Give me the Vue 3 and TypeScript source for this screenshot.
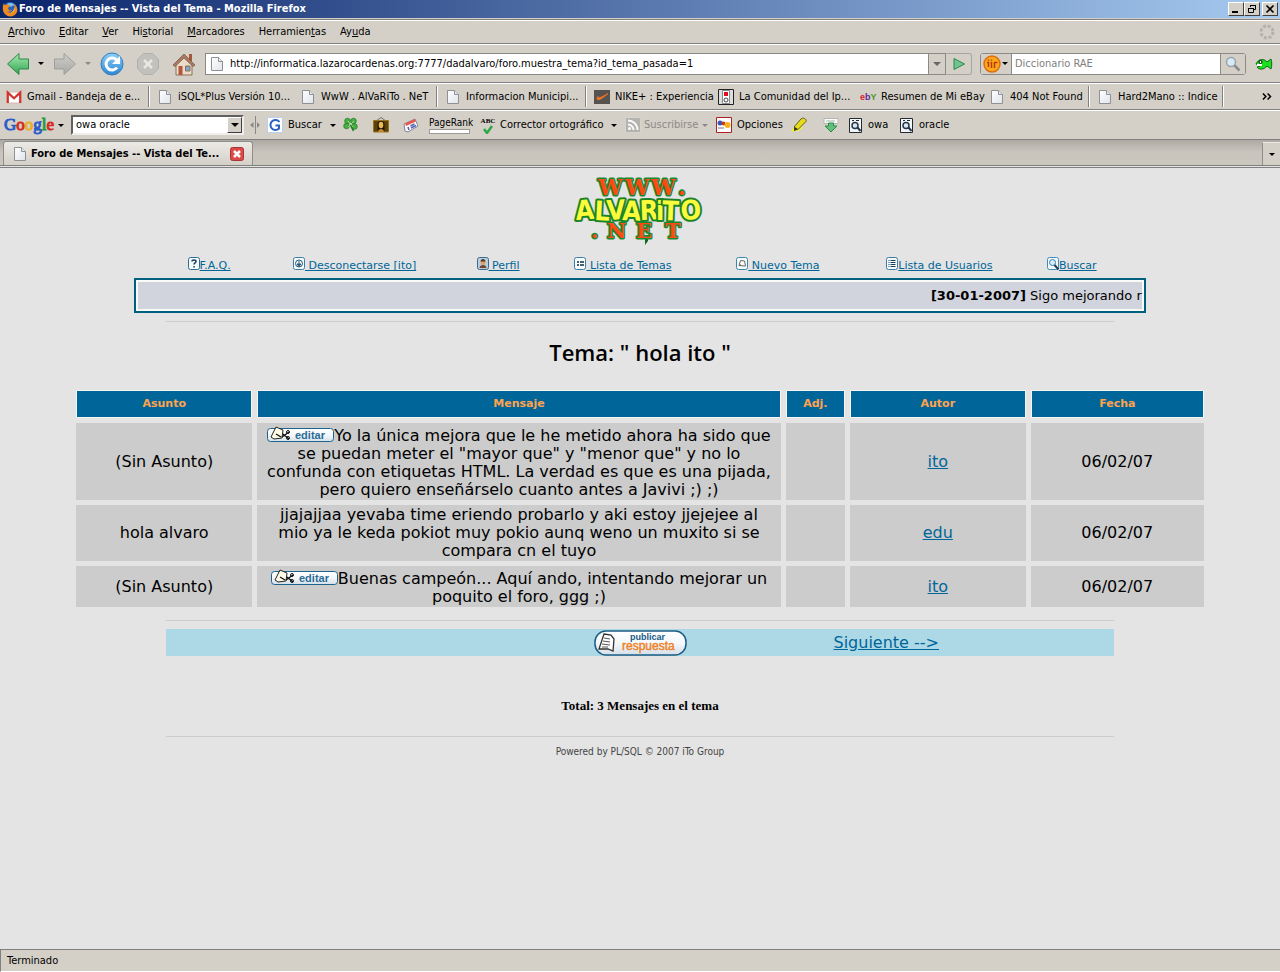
<script setup lang="ts">
import { ref } from 'vue'

interface MenuEntry { before: string; key: string; after: string }
interface Bookmark { icon: string; label: string; sep?: boolean }
interface NavLink { icon: string; label: string }
interface Message { subject: string; lines: string[]; editable: boolean; author: string; date: string }

const menus: MenuEntry[] = [
  { before: '', key: 'A', after: 'rchivo' },
  { before: '', key: 'E', after: 'ditar' },
  { before: '', key: 'V', after: 'er' },
  { before: 'Hi', key: 's', after: 'torial' },
  { before: '', key: 'M', after: 'arcadores' },
  { before: 'Herramien', key: 't', after: 'as' },
  { before: 'Ay', key: 'u', after: 'da' },
]

const bookmarks: Bookmark[] = [
  { icon: 'gmail', label: 'Gmail - Bandeja de e...', sep: true },
  { icon: 'doc', label: 'iSQL*Plus Versión 10...' },
  { icon: 'doc', label: 'WwW . AlVaRiTo . NeT', sep: true },
  { icon: 'doc', label: 'Informacion Municipi...', sep: true },
  { icon: 'swoosh', label: 'NIKE+ : Experiencia' },
  { icon: 'ipod', label: 'La Comunidad del Ip...' },
  { icon: 'ebay', label: 'Resumen de Mi eBay' },
  { icon: 'doc', label: '404 Not Found', sep: true },
  { icon: 'doc', label: 'Hard2Mano :: Indice', sep: true },
]

const navLinks: NavLink[] = [
  { icon: 'n-faq', label: 'F.A.Q.' },
  { icon: 'n-off', label: '\u00a0Desconectarse [ito]' },
  { icon: 'n-user', label: '\u00a0Perfil' },
  { icon: 'n-list', label: '\u00a0Lista de Temas' },
  { icon: 'n-new', label: '\u00a0Nuevo Tema' },
  { icon: 'n-users', label: 'Lista de Usuarios' },
  { icon: 'n-find', label: 'Buscar' },
]

const messages: Message[] = [
  {
    subject: '(Sin Asunto)',
    lines: [
      'Yo la única mejora que le he metido ahora ha sido que',
      'se puedan meter el "mayor que" y "menor que" y no lo',
      'confunda con etiquetas HTML. La verdad es que es una pijada,',
      'pero quiero enseñárselo cuanto antes a Javivi ;) ;)',
    ],
    editable: true, author: 'ito', date: '06/02/07',
  },
  {
    subject: 'hola alvaro',
    lines: [
      'jjajajjaa yevaba time eriendo probarlo y aki estoy jjejejee al',
      'mio ya le keda pokiot muy pokio aunq weno un muxito si se',
      'compara cn el tuyo',
    ],
    editable: false, author: 'edu', date: '06/02/07',
  },
  {
    subject: '(Sin Asunto)',
    lines: ['Buenas campeón... Aquí ando, intentando mejorar un', 'poquito el foro, ggg ;)'],
    editable: true, author: 'ito', date: '06/02/07',
  },
]

const address = ref('http://informatica.lazarocardenas.org:7777/dadalvaro/foro.muestra_tema?id_tema_pasada=1')
const dictionary = ref('')
const query = ref('owa oracle')
</script>

<template>
  <div class="window">
    <svg class="defs" aria-hidden="true">
      <defs>
        <linearGradient id="g-green" x1="0" y1="0" x2="0" y2="1"><stop offset="0" stop-color="#a8eab0" /><stop offset="1" stop-color="#2fa552" /></linearGradient>
        <linearGradient id="g-grey" x1="0" y1="0" x2="0" y2="1"><stop offset="0" stop-color="#cfcdc8" /><stop offset="1" stop-color="#aaa8a4" /></linearGradient>
        <linearGradient id="g-blue" x1="0" y1="0" x2="0" y2="1"><stop offset="0" stop-color="#8fd0f8" /><stop offset="1" stop-color="#2d86d0" /></linearGradient>
        <linearGradient id="g-pill" x1="0" y1="0" x2="0" y2="1"><stop offset="0" stop-color="#ffffff" /><stop offset="0.5" stop-color="#f4f8fb" /><stop offset="1" stop-color="#d3dfe8" /></linearGradient>
        <linearGradient id="g-page" x1="0" y1="0" x2="1" y2="1"><stop offset="0" stop-color="#ffffff" /><stop offset="1" stop-color="#dfe4ea" /></linearGradient>
      </defs>
      <symbol id="doc" viewBox="0 0 16 16"><path d="M2.500 1.500h7l4 4v9h-11z" fill="url(#g-page)" stroke="#8d9095" /><path d="M9.500 1.500v4h4" fill="#e8ecf0" stroke="#8d9095" /></symbol>
      <symbol id="gmail" viewBox="0 0 16 16"><path d="M1 3h14v11H1z" fill="#fff" stroke="#d8a8a4" stroke-width=".8" /><path d="M1.800 14V3.600L8 9.200l6.200-5.600V14" fill="none" stroke="#d0342c" stroke-width="2.200" /></symbol>
      <symbol id="swoosh" viewBox="0 0 16 16"><path d="M0 1h16v14H0z" fill="#55524f" /><path d="M4 7.500c0 2 2 1.800 10-3C8 9.500 5 11.500 3.500 10.500 2.500 9.500 3.300 8.300 4 7.500z" fill="#ee7426" stroke="#ee7426" /></symbol>
      <symbol id="ipod" viewBox="0 0 16 16"><path d="M.5.500h15v15H.5z" fill="#ddd" stroke="#222" /><path d="M4.500 1.500h7v13h-7z" fill="#fff" stroke="#888" /><path d="M6 3h4v4H6z" fill="#e01020" /><circle cx="8" cy="11" r="2" fill="none" stroke="#444" /></symbol>
      <symbol id="finder" viewBox="0 0 14 16"><path d="M.500 1.500h12v14H.500z" fill="#f4f5f7" stroke="#222a33" /><path d="M3 3.500h2M7 3.500h3" stroke="#222a33" /><circle cx="6" cy="8.500" r="3" fill="#dbe7f2" stroke="#26384c" stroke-width="1.500" /><path d="M8.500 10.500l3 3.500" stroke="#26384c" stroke-width="2" /></symbol>
      <symbol id="n-faq" viewBox="0 0 12 13"><rect x=".5" y=".5" width="11" height="12" rx="2" fill="#f5fafd" stroke="#2c6c94" /><path d="M4 4.500c0-2 4-2 4 0 0 1.300-2 1.300-2 3M6 9v1.500" fill="none" stroke="#173f5c" stroke-width="1.500" /></symbol>
      <symbol id="n-off" viewBox="0 0 12 13"><rect x=".5" y=".5" width="11" height="12" rx="2" fill="#f5fafd" stroke="#3c7ca4" /><circle cx="6" cy="6.500" r="3.500" fill="none" stroke="#285878" /><path d="M6 4v5M4 7l2 2.500L8 7z" fill="#285878" stroke="#285878" /></symbol>
      <symbol id="n-user" viewBox="0 0 12 13"><rect x=".5" y=".5" width="11" height="12" rx="2" fill="#b9cedc" stroke="#3c6c8c" /><path d="M2.500 11c0-4 7-4 7 0z" fill="#744434" /><circle cx="6" cy="5.500" r="2.500" fill="#dca070" /><path d="M3.500 4.500c0-3.500 5-3.500 5 0z" fill="#54371f" /></symbol>
      <symbol id="n-list" viewBox="0 0 12 13"><rect x=".5" y=".5" width="11" height="12" rx="2" fill="#f5fafd" stroke="#3c7ca4" /><path d="M3 5h2M3 8h2M6 5h4M6 8h4" stroke="#142c3c" stroke-width="1.500" /></symbol>
      <symbol id="n-new" viewBox="0 0 12 13"><rect x=".5" y=".5" width="11" height="12" rx="2" fill="#f5fafd" stroke="#3c84ac" /><path d="M4.500 3.500l4 .5 1 5-6.500-.5z" fill="#fff" stroke="#70645c" /><path d="M3 8.500l2-.8" stroke="#70645c" /></symbol>
      <symbol id="n-users" viewBox="0 0 12 13"><rect x=".5" y=".5" width="11" height="12" rx="2" fill="#f5fafd" stroke="#3c7ca4" /><path d="M2.500 3.500h1M2.500 5.500h1M2.500 7.500h1M2.500 9.500h1M4.500 3.500h5M4.500 5.500h5M4.500 7.500h5M4.500 9.500h5" stroke="#1c3c54" /></symbol>
      <symbol id="n-find" viewBox="0 0 12 13"><rect x=".5" y=".5" width="11" height="12" rx="2" fill="#f5fafd" stroke="#3c8cbc" /><circle cx="5.500" cy="5.500" r="3" fill="#d8eefa" stroke="#3880ac" /><path d="M7.500 8l4 4.500" stroke="#173f5c" stroke-width="2" /></symbol>
    </svg>

    <header class="titlebar">
      <svg class="fox" viewBox="0 0 16 16" aria-hidden="true">
        <circle cx="8" cy="8" r="7" fill="#2c62b8" /><path d="M5 3c3-2 7-1 8 2-2-1-3 0-4 1z" fill="#7cc4f0" />
        <path d="M13 5c2 4 0 8-4 9-3 0-5-1-6-3 3 3 9 1 10-6z" fill="#fcd04c" />
        <path d="M2 2c0 2 1 2 2 2 2-1 3 0 4 1L6 7c0 2 2 3 4 2-1 2-4 2-5 1 2 3 7 2 8-2 0-2-.5-4-2-5 4 1 5 5 4 8-2 5-9 6-12 2C0 10 .5 5 2 2z" fill="#f08a1c" />
      </svg>
      <span class="title">Foro de Mensajes -- Vista del Tema - Mozilla Firefox</span>
      <div class="winbtns">
        <button type="button" class="winbtn" aria-label="Minimizar"><svg viewBox="0 0 12 10"><path d="M2 8h6" stroke="#000" stroke-width="2" /></svg></button>
        <button type="button" class="winbtn" aria-label="Restaurar"><svg viewBox="0 0 12 10"><path d="M4.500 3V1.500h5v4H8M4 1.500h6M2.500 4.500h5v4h-5zM2 4.500h6" fill="none" stroke="#000" /></svg></button>
        <button type="button" class="winbtn close" aria-label="Cerrar"><svg viewBox="0 0 12 10"><path d="M2.500 1.500l7 7M9.500 1.500l-7 7" stroke="#000" stroke-width="1.600" /></svg></button>
      </div>
    </header>

    <nav class="menubar" aria-label="Menú">
      <button v-for="m in menus" :key="m.before + m.key" type="button" class="menu">{{ m.before }}<u>{{ m.key }}</u>{{ m.after }}</button>
      <svg class="throbber" viewBox="0 0 16 16" aria-hidden="true"><circle cx="8" cy="8" r="6" fill="none" stroke="#b3b1ac" stroke-width="3" stroke-dasharray="3 1.710" /></svg>
    </nav>

    <div class="navbar">
      <button type="button" class="flat back" aria-label="Atrás"><svg viewBox="0 0 24 24"><path d="M1.500 12L13 1.500V7h9.500v10H13v5.500z" fill="url(#g-green)" stroke="#2b8a45" /></svg></button>
      <button type="button" class="flat drop" aria-label="Historial atrás"><i class="arrow"></i></button>
      <button type="button" class="flat fwd" aria-label="Adelante"><svg viewBox="0 0 24 24"><path d="M22.500 12L11 1.500V7H1.500v10H11v5.500z" fill="url(#g-grey)" stroke="#a09e9a" /></svg></button>
      <button type="button" class="flat drop" aria-label="Historial adelante"><i class="arrow dim"></i></button>
      <button type="button" class="flat reload" aria-label="Recargar"><svg viewBox="0 0 24 24"><circle cx="12" cy="12" r="11" fill="url(#g-blue)" stroke="#2c7cc4" /><path d="M17 15.500a6 6 0 1 1-.5-7.500" fill="none" stroke="#fff" stroke-width="3" /><path d="M20 4v8h-8z" fill="#fff" /></svg></button>
      <button type="button" class="flat" aria-label="Detener"><svg viewBox="0 0 24 24"><path d="M7.500 1.500h9l6 6v9l-6 6h-9l-6-6v-9z" fill="#c3c1bd" stroke="#b1afab" /><path d="M8 8l8 8M16 8l-8 8" stroke="#e9e7e3" stroke-width="2.500" /></svg></button>
      <button type="button" class="flat" aria-label="Inicio"><svg viewBox="0 0 24 24"><path d="M17 2h3v7h-3z" fill="#a4583c" /><path d="M4 11l8-8 8 8v12H4z" fill="#e9dcc8" stroke="#8d7059" /><path d="M1 13L12 2l11 11-2 1.500L12 6l-9 8.500z" fill="#a97b62" stroke="#74503c" stroke-width=".7" /><path d="M6.500 14h4v9h-4z" fill="#b5563c" /><path d="M13.500 14h4.500v5h-4.500z" fill="#7fa6cc" stroke="#8d7059" /></svg></button>
      <div class="address">
        <svg class="ic16" aria-hidden="true"><use href="#doc" /></svg>
        <input v-model="address" type="text" aria-label="Dirección" />
        <button type="button" class="seg" aria-label="Mostrar historial"><i class="arrow grey"></i></button>
      </div>
      <button type="button" class="go" aria-label="Ir"><svg viewBox="0 0 14 14"><path d="M2 1.500L12.500 7 2 12.500z" fill="#70c48c" stroke="#2c8450" /></svg></button>
      <div class="search">
        <button type="button" class="engine" aria-label="Motor de búsqueda">
          <svg viewBox="0 0 18 18"><circle cx="9" cy="9" r="8" fill="#fba81c" stroke="#dd6c10" stroke-width="1.500" /><path d="M5.500 7v5M8.500 7v6M11.500 7v6M4 7.500h2M7.500 7.500h1M11 7.500h3.500M5.500 4.500v1.200M8.500 4.500v1.200" stroke="#b83c08" stroke-width="1.500" /></svg>
          <i class="arrow"></i>
        </button>
        <input v-model="dictionary" type="text" placeholder="Diccionario RAE" aria-label="Buscar en Diccionario RAE" />
        <button type="button" class="seg wide" aria-label="Buscar"><svg viewBox="0 0 16 16"><circle cx="6" cy="6" r="4.500" fill="#d6eaf6" stroke="#9aa2aa" stroke-width="1.500" /><path d="M9.500 9.500l5 5" stroke="#888a8e" stroke-width="2.500" /></svg></button>
      </div>
      <button type="button" class="flat fish" aria-label="Traducir"><svg viewBox="0 0 18 14"><path d="M1 7c2-5 8-6 11-2l4-3c1 3 1 7 0 10l-4-3c-3 4-8 4-10 1l3-1z" fill="#1fe01f" stroke="#0a6a14" /><path d="M2 8h5" stroke="#fff" stroke-width="2" /><circle cx="5.500" cy="5" r="1.500" fill="#fff" stroke="#000" /></svg></button>
    </div>

    <nav class="bookmarks" aria-label="Marcadores">
      <a v-for="b in bookmarks" :key="b.label" href="#" :class="['bm', { sep: b.sep }]">
        <span v-if="b.icon === 'ebay'" class="ebay" aria-hidden="true"><i class="e">e</i><i class="b">b</i><i class="y">Y</i></span>
        <svg v-else class="ic16" aria-hidden="true"><use :href="'#' + b.icon" /></svg><span>{{ b.label }}</span>
      </a>
      <button type="button" class="flat more" aria-label="Más marcadores"><svg viewBox="0 0 8 6"><path d="M.500.500L3 3 .500 5.500M4.500.500L7 3 4.500 5.500" fill="none" stroke="#000" stroke-width="1.300" /></svg></button>
    </nav>

    <div class="gbar">
      <button type="button" class="flat glogo"><span class="gtext"><span class="c1">G</span><span class="c2">o</span><span class="c3">o</span><span class="c1">g</span><span class="c4">l</span><span class="c2">e</span></span><i class="arrow"></i></button>
      <div class="combo">
        <input v-model="query" type="text" aria-label="Búsqueda en Google" />
        <button type="button" aria-label="Desplegar"><i class="arrow big"></i></button>
      </div>
      <svg class="split" viewBox="0 0 10 18" aria-hidden="true"><path d="M5.500 0v18" stroke="#8a8883" /><path d="M3.500 6v6L0 9zM7 6v6l3-3z" fill="#8a8883" /></svg>
      <button type="button" class="flat gi"><svg class="ic16" viewBox="0 0 16 16"><path d="M.500.500h15v15H.500z" fill="#fff" stroke="#b8cfee" /><path d="M12.500 5A5 5 0 1 0 12 11.500V8.500H8.500" fill="none" stroke="#2a62c4" stroke-width="2" /></svg>Buscar</button>
      <button type="button" class="flat" aria-label="Opciones de búsqueda"><i class="arrow"></i></button>
      <button type="button" class="flat" aria-label="Voy a tener suerte"><svg class="ic16" viewBox="0 0 16 16"><g fill="#48b040" stroke="#207824" stroke-width=".7"><circle cx="4.500" cy="4" r="2.800" /><circle cx="10.500" cy="4" r="2.800" /><circle cx="3.500" cy="9" r="2.800" /><circle cx="11.500" cy="9.500" r="2.800" /></g><path d="M5 4l5 6M11 4l-6 6" stroke="#a0dc90" /><path d="M7.500 8l3 6" stroke="#207824" stroke-width="1.500" /></svg></button>
      <button type="button" class="flat" aria-label="Imágenes"><svg class="ic16" viewBox="0 0 16 16"><path d="M3 4l5-3.500L13 4" fill="none" stroke="#77716b" /><path d="M.500 3.500h15V15H.500z" fill="#5c430c" stroke="#9a7418" /><path d="M4.500 14V7c0-4 7-4 7 0v7z" fill="#21160a" /><ellipse cx="8" cy="8" rx="2.300" ry="3.300" fill="#eabb4c" /><path d="M5 15c0-4 6-4 6 0z" fill="#c6882c" /></svg></button>
      <button type="button" class="flat" aria-label="Noticias"><svg class="ic16" viewBox="0 0 16 16"><path d="M1 7l11-5 3 7-10 6-3-1z" fill="#faf8f8" stroke="#86849a" /><path d="M2 6.500L12 2l1 2.500L3 9z" fill="#e6594c" /><path d="M5 10l1 3M7.500 9l4-2M8 11l5-2.500" stroke="#5564b8" stroke-width="1.500" /></svg></button>
      <button type="button" class="flat rank"><span>PageRank</span><i class="meter"></i></button>
      <button type="button" class="flat gi spell"><span class="abc" aria-hidden="true"><b>ABC</b><svg viewBox="0 0 10 9"><path d="M1 4l3 4 5-7" fill="none" stroke="#2ca848" stroke-width="2.500" /></svg></span>Corrector ortográfico</button>
      <button type="button" class="flat" aria-label="Idiomas"><i class="arrow"></i></button>
      <button type="button" class="flat gi off" disabled><svg class="ic16" viewBox="0 0 16 16"><path d="M.500.500h15v15H.500z" fill="#b5b3af" stroke="#d6d4cf" /><circle cx="4.500" cy="11.500" r="1.500" fill="#fff" /><path d="M3 7.500c3 0 5.500 2.500 5.500 5.500M3 3.500c5 0 9.500 4 9.500 9.500" fill="none" stroke="#fff" stroke-width="1.800" /></svg>Suscribirse</button>
      <button type="button" class="flat" disabled aria-label="Lectores"><i class="arrow dim"></i></button>
      <button type="button" class="flat gi"><svg class="ic16" viewBox="0 0 16 16"><path d="M.500.500h15v15H.500z" fill="#fff" stroke="#b02020" /><path d="M2 11h6" stroke="#b8b8c0" stroke-width="2" /><circle cx="4" cy="6" r="2.500" fill="#2c5cb8" /><circle cx="7.500" cy="6.500" r="2" fill="#d43420" /><circle cx="11.500" cy="8" r="3" fill="#f4b41c" /></svg>Opciones</button>
      <button type="button" class="flat" aria-label="Resaltar"><svg class="ic16" viewBox="0 0 16 16"><path d="M0 14c2-4 6-5 12-4-2 4-7 5-12 4z" fill="#f6f230" /><path d="M3 10l7-8c2-2 6 0 5 2.500l-8 8z" fill="#e6dc1c" stroke="#615c18" /><path d="M3 10l4 2.500L3 14z" fill="#3a3818" /></svg></button>
      <button type="button" class="flat" aria-label="Enviar"><svg class="ic16" viewBox="0 0 16 16"><path d="M1 1.500h14v5H1z" fill="#fafafa" stroke="#b6b6b2" /><path d="M3 4h9" stroke="#9fbda6" /><path d="M5.500 6h5v3H14l-6 6-6-6h3.500z" fill="#62c07c" stroke="#2f8c4c" /></svg></button>
      <button type="button" class="flat gi"><svg class="ic14"><use href="#finder" /></svg>owa</button>
      <button type="button" class="flat gi"><svg class="ic14"><use href="#finder" /></svg>oracle</button>
    </div>

    <div class="tabbar">
      <div class="tab">
        <svg class="ic16" aria-hidden="true"><use href="#doc" /></svg>
        <span>Foro de Mensajes -- Vista del Te...</span>
        <button type="button" class="tabclose" aria-label="Cerrar pestaña"><svg viewBox="0 0 14 14"><rect x=".5" y=".5" width="13" height="13" rx="2" fill="#dc4a48" stroke="#a83434" /><path d="M4 4l6 6M10 4l-6 6" stroke="#fff" stroke-width="2.500" /></svg></button>
      </div>
      <button type="button" class="tablist" aria-label="Lista de pestañas"><i class="arrow"></i></button>
    </div>

    <main class="page">
      <svg class="logo" viewBox="0 0 134 70" role="img" aria-label="www.alvarito.net">
        <path d="M72 58v10l3-4v-6z" fill="#0a6a20" />
        <g stroke-linejoin="round" paint-order="stroke" font-weight="700">
          <g fill="#ff4a14" stroke="#178a34" stroke-width="3">
            <text y="18" font-family="DejaVu Serif" font-size="22" x="25 52 78 105">WWW.</text>
            <text y="61" font-family="DejaVu Serif" font-size="21" x="18 34 63 92">.NET</text>
          </g>
          <text y="43" font-family="DejaVu Sans Condensed" font-size="27" x="3 21 34 49 67 83 89 108" rotate="-4 3 -3 2 -2 0 2 -3" fill="#fbfb3c" stroke="#1c8428" stroke-width="4">ALVARiTO</text>
        </g>
      </svg>

      <nav class="links" aria-label="Foro">
        <a v-for="l in navLinks" :key="l.label" href="#"><svg aria-hidden="true"><use :href="'#' + l.icon" /></svg><span>{{ l.label }}</span></a>
      </nav>

      <div class="news"><p><b>[30-01-2007]</b> Sigo mejorando r</p></div>
      <hr />
      <h2>Tema: " hola ito "</h2>

      <table class="posts">
        <colgroup><col class="c-subject" /><col /><col class="c-adj" /><col class="c-author" /><col class="c-date" /></colgroup>
        <thead>
          <tr><th scope="col">Asunto</th><th scope="col">Mensaje</th><th scope="col">Adj.</th><th scope="col">Autor</th><th scope="col">Fecha</th></tr>
        </thead>
        <tbody>
          <tr v-for="(m, i) in messages" :key="i">
            <td>{{ m.subject }}</td>
            <td :class="['msg', { first: m.editable }]">
              <div v-for="(line, n) in m.lines" :key="n" class="line">
                <a v-if="m.editable && n === 0" href="#" class="edit" aria-label="editar">
                  <svg viewBox="0 0 67 18"><rect x=".5" y="3.500" width="66" height="13" rx="3" fill="url(#g-pill)" stroke="#1c648c" /><path d="M4 12l5-10 7 3-1 8-8 1z" fill="#fffbe6" stroke="#222" /><path d="M9 9l5 3M22 7l-7 5M22 14l-6-5" stroke="#111" stroke-width="1.300" /><circle cx="21" cy="7" r="1.500" fill="none" stroke="#111" /><circle cx="21" cy="13" r="1.500" fill="none" stroke="#111" /><text x="28" y="14" font-family="Liberation Sans" font-weight="700" font-size="11" fill="#2a6c96">editar</text></svg>
                </a>{{ line }}
              </div>
            </td>
            <td></td>
            <td><a href="#">{{ m.author }}</a></td>
            <td>{{ m.date }}</td>
          </tr>
        </tbody>
      </table>

      <hr class="after" />
      <div class="actions">
        <a href="#" class="reply" aria-label="publicar respuesta">
          <svg viewBox="0 0 93 26"><rect x="1" y="1" width="91" height="24" rx="11" fill="url(#g-pill)" stroke="#1c5c84" stroke-width="1.500" /><path d="M10 4l7 1 3 4-1 12-5-2-9 0z" fill="#fff" stroke="#333" stroke-width="1.300" /><path d="M10 8l6 1M9 11l7 1M8 14l8 1M8 17l6 0" stroke="#555" /><text x="36" y="10" font-family="Liberation Sans" font-weight="700" font-size="9" fill="#1a5a88">publicar</text><text x="28" y="20" font-family="Liberation Sans" font-size="12" fill="#f08020" stroke="#f08020" stroke-width=".4">respuesta</text></svg>
        </a>
        <a href="#" class="next">Siguiente --&gt;</a>
      </div>
      <p class="total">Total: 3 Mensajes en el tema</p>
      <hr />
      <p class="powered">Powered by PL/SQL © 2007 iTo Group</p>
    </main>

    <footer class="status">Terminado</footer>
  </div>
</template>

<style>
body { margin: 0; background: #e4e4e4; }
</style>

<style scoped>
.window { min-height: 100vh; display: flex; flex-direction: column; background: #d4d0c8; color: #000; font: 11px/14px "DejaVu Sans Condensed", "DejaVu Sans", sans-serif; overflow: hidden; }
.window * { box-sizing: border-box; }
.defs { position: absolute; width: 0; height: 0; }
button, input { font: inherit; color: inherit; margin: 0; padding: 0; border: 0; background: none; border-radius: 0; outline: 0; min-width: 0; }
svg { display: block; flex: none; }
.ic16 { width: 16px; height: 16px; }
.ic14 { width: 14px; height: 16px; }
.flat { display: flex; align-items: center; white-space: nowrap; }
.arrow { flex: none; width: 0; height: 0; border: 3px solid transparent; border-top-color: #000; border-bottom-width: 0; }
.arrow.dim { border-top-color: #8c8a86; }
.arrow.grey { border-width: 4px 4px 0; border-top-color: #666; }
.arrow.big { border-width: 4px 4px 0; }

.titlebar { height: 19px; display: flex; align-items: center; padding: 0 2px; background: linear-gradient(90deg, #0a246a, #a6caf0); color: #fff; font-weight: 700; border-bottom: 1px solid #d4d0c8; }
.fox { width: 16px; height: 16px; }
.title { flex: 1; padding-left: 1px; white-space: nowrap; }
.winbtns { display: flex; }
.winbtn { width: 16px; height: 14px; display: flex; align-items: center; justify-content: center; background: #d4d0c8; border: 1px solid; border-color: #fff #404040 #404040 #fff; }
.winbtn svg { width: 12px; height: 10px; }
.winbtn.close { margin-left: 2px; }

.menubar { height: 25px; display: flex; align-items: center; gap: 14px; padding: 1px 5px 0 8px; border-top: 1px solid #808080; border-bottom: 1px solid #808080; box-shadow: inset 0 1px #fff; }
.menu { white-space: nowrap; }
.throbber { width: 16px; height: 16px; margin-left: auto; }

.navbar { height: 39px; display: flex; align-items: center; padding: 0 7px 0 6px; border-top: 1px solid #fff; border-bottom: 1px solid #808080; }
.navbar .flat svg { width: 24px; height: 24px; }
.navbar .flat + .flat { margin-left: 12px; }
.navbar .drop.flat { margin-left: 8px; width: 7px; }
.navbar .flat.fwd, .navbar .flat.reload { margin-left: 8px; }
.address { flex: 1; margin-left: 9px; height: 22px; display: flex; align-items: center; background: #fff; border: 1px solid #8c8a86; padding-left: 3px; }
.address input { flex: 1; padding-left: 5px; height: 18px; }
.seg { width: 17px; height: 20px; display: flex; align-items: center; justify-content: center; background: #d4d0c8; border-left: 1px solid #8c8a86; }
.seg.wide { width: 25px; }
.seg svg { width: 16px; height: 16px; }
.go { width: 26px; height: 22px; display: flex; align-items: center; justify-content: center; border: 1px solid #a8a6a2; border-left: 0; border-radius: 0 3px 3px 0; }
.go svg { width: 14px; height: 14px; }
.search { width: 266px; margin-left: 8px; height: 22px; display: flex; align-items: center; background: #fff; border: 1px solid #8c8a86; border-radius: 3px; overflow: hidden; }
.engine { width: 31px; height: 20px; display: flex; align-items: center; justify-content: space-between; padding: 0 3px 0 2px; background: #d4d0c8; border-right: 1px solid #8c8a86; }
.engine svg { width: 18px; height: 18px; }
.search input { flex: 1; padding-left: 3px; }
.search input::placeholder { color: #808080; opacity: 1; }
.navbar .fish.flat { margin-left: 9px; }
.navbar .fish.flat svg { width: 18px; height: 14px; }

.bookmarks { height: 27px; display: grid; grid-template-columns: 151px 143px 145px 149px 124px 142px 129px 108px 134px 1fr; align-items: center; padding: 0 6px; border-top: 1px solid #fff; border-bottom: 1px solid #808080; }
.bm { height: 21px; display: flex; align-items: center; gap: 5px; color: #000; text-decoration: none; white-space: nowrap; }
.bm.sep { border-right: 1px solid #808080; box-shadow: 1px 0 #fff; margin-right: 8px; }
.ebay { width: 16px; font: 700 9px/12px "Liberation Sans", sans-serif; }
.ebay i { font-style: normal; }
.e { color: #d8202c; }
.b { color: #5a2a9a; }
.y { color: #4a9a1c; }
.more { justify-content: flex-end; padding-right: 2px; }
.more svg { width: 10px; height: 7px; }

.gbar { height: 30px; display: grid; grid-template-columns: 67px 173px 23px 63px 13px 30px 30px 26px 51px 131px 14px 77px 14px 75px 32px 26px 51px 1fr; align-items: center; padding: 0 4px; border-top: 1px solid #fff; border-bottom: 1px solid #808080; }
.gi { gap: 5px; }
.gi.off { color: #8c8a86; gap: 3px; }
.glogo { gap: 4px; }
.gtext { font: 17px/20px "Liberation Serif", serif; -webkit-text-stroke: 1px; }
.c1 { color: #2a5cc8; }
.c2 { color: #d42c24; }
.c3 { color: #e8b020; }
.c4 { color: #2a9a3c; }
.combo { height: 20px; display: flex; background: #fff; border: 2px solid; border-color: #606060 #f0eeea #f0eeea #606060; }
.combo input { flex: 1; padding-left: 3px; }
.combo button { width: 15px; display: flex; align-items: center; justify-content: center; background: #d4d0c8; border: 1px solid; border-color: #fff #404040 #404040 #fff; }
.split { width: 10px; height: 18px; margin-left: 6px; }
.rank { flex-direction: column; align-items: flex-start; line-height: 12px; font-size: 10px; }
.meter { width: 41px; height: 5px; background: #fff; border: 1px solid #9c9a96; }
.spell { gap: 4px; }
.abc { width: 16px; display: flex; flex-direction: column; align-items: center; font: 7px/8px "Liberation Serif", serif; }
.abc svg { width: 10px; height: 9px; }

.tabbar { height: 28px; display: flex; align-items: flex-end; justify-content: space-between; padding: 0 0 2px 3px; background: linear-gradient(#aeaaa3, #c9c5bd 12px, #cbc7bf); border-bottom: 1px solid #808080; box-shadow: inset 0 -1px #e4e4e4, inset 0 -2px #808080; }
.tab { width: 250px; height: 24px; display: flex; align-items: center; padding: 0 8px; background: linear-gradient(#eceae6, #d4d0c8); border: 1px solid #908e8a; border-bottom: 0; border-radius: 3px 3px 0 0; font-weight: 700; white-space: nowrap; }
.tab span { flex: 1; padding-left: 3px; }
.tabclose svg { width: 14px; height: 14px; }
.tablist { width: 18px; height: 23px; display: flex; align-items: center; justify-content: center; background: #d4d0c8; border-left: 1px solid #908e8a; border-top: 1px solid #eceae6; }

.page { flex: 1; display: flex; flex-direction: column; align-items: center; padding: 9px 8px; background: #e4e4e4; font-family: "DejaVu Sans", Verdana, sans-serif; }
.page a { color: #006699; }
.logo { width: 134px; height: 70px; }
.links { width: 80%; margin-top: 10px; height: 18px; display: grid; grid-template-columns: 149fr 141fr 145fr 104fr 205fr 117fr 147fr; justify-items: center; font-size: 11px; line-height: 14px; }
.links a { display: flex; align-items: flex-start; text-decoration: none; white-space: nowrap; }
.links svg { width: 12px; height: 13px; }
.links span { padding-top: 2px; text-decoration: underline; }
.news { width: 80%; margin-top: 3px; height: 35px; padding: 2px; border: 2px solid #006080; background: #d1d4dd; box-shadow: inset 0 0 0 2px #fafafa; overflow: hidden; }
.news p { margin: 0; padding-left: 79%; font-size: 13px; line-height: 28px; white-space: nowrap; }
hr { width: 75%; margin: 8px 0 0; border: 0; border-top: 1px solid #cccccc; }
h2 { margin: 15px 0 23px; font: 600 22px/30px "Open Sans", sans-serif; }
.posts { width: 90%; table-layout: fixed; border-collapse: separate; border-spacing: 5px; margin-top: -5px; font-size: 16px; line-height: 18px; text-align: center; }
.c-subject, .c-author { width: 176px; }
.c-adj { width: 59px; }
.c-date { width: 173px; }
.posts th { height: 28px; padding: 0; background: #006699; color: #ffa34f; border: 1px solid #f4f4f4; font-size: 11px; line-height: 14px; }
.posts td { padding: 1px 0; background: #cccccc; }
.line { display: flex; justify-content: center; white-space: nowrap; }
.first { vertical-align: bottom; }
.first .line:first-child { height: 21px; padding-top: 3px; }
.edit { margin-top: -2px; height: 18px; }
.edit svg { width: 67px; height: 18px; }
.after { margin-top: 8px; }
.actions { width: 75%; margin-top: 8px; height: 27px; display: grid; grid-template-columns: 1fr 93px 1fr; align-items: center; background: #add8e6; }
.reply { grid-column: 2; }
.reply svg { width: 93px; height: 26px; }
.next { justify-self: center; padding-right: 28px; font-size: 16px; line-height: 18px; }
.total { margin: 42px 0 14px; font: 700 13px/16px "Liberation Serif", serif; }
.powered { margin: 8px 0 0; font: 10px/14px "DejaVu Sans Condensed", sans-serif; color: #444; }

.status { height: 23px; padding: 4px 6px; border-top: 1px solid #808080; border-left: 1px solid #808080; border-bottom: 1px solid #fff; }
</style>
